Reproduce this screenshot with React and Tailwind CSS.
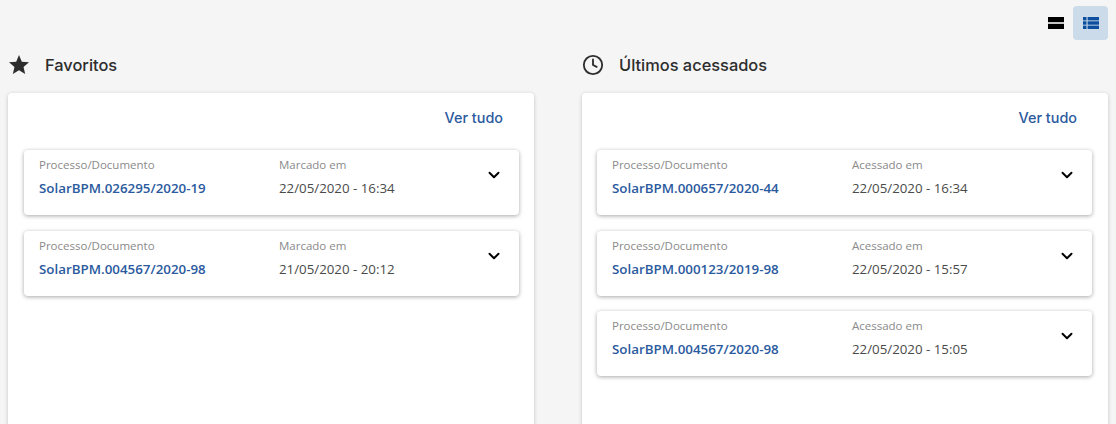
import { Clock, ChevronDown } from 'lucide-react';

const favoritos = [
  { id: 'SolarBPM.026295/2020-19', date: '22/05/2020 - 16:34' },
  { id: 'SolarBPM.004567/2020-98', date: '21/05/2020 - 20:12' },
];

const acessados = [
  { id: 'SolarBPM.000657/2020-44', date: '22/05/2020 - 16:34' },
  { id: 'SolarBPM.000123/2019-98', date: '22/05/2020 - 15:57' },
  { id: 'SolarBPM.004567/2020-98', date: '22/05/2020 - 15:05' },
];

const ItemCard = ({ item, dateLabel }) => (
  <div className="flex h-[65px] rounded bg-white pl-[15px] pt-[7px] shadow-[0_1px_4px_rgba(0,0,0,0.35)]">
    <div className="w-[240px]">
      <p className="text-[11.5px] leading-[16px] text-[#8a8a8a]">Processo/Documento</p>
      <a href="#" className="mt-[5px] block text-[13.35px] font-semibold leading-[20px] text-[#2b5a9e]">{item.id}</a>
    </div>
    <div className="flex-1">
      <p className="text-[11.5px] leading-[16px] text-[#8a8a8a]">{dateLabel}</p>
      <p className="mt-[5px] text-[13.3px] leading-[20px] text-[#4a4a4a]">{item.date}</p>
    </div>
    <ChevronDown size={18} strokeWidth={2.6} className="mr-[16px] mt-[9px] text-black" />
  </div>
);

const Section = ({ icon, title, dateLabel, items, listClass }) => (
  <section className="w-[526px]">
    <div className="flex h-[26px] items-center">
      <span className="flex w-[37px] justify-start">{icon}</span>
      <h2 className="text-[16.4px] font-medium text-[#2d2d2d] [font-family:Inter,sans-serif]">{title}</h2>
    </div>
    <div className="mt-[15px] h-[400px] rounded bg-white pt-[16px] shadow-[0_1px_4px_rgba(0,0,0,0.2)]">
      <div className="flex justify-end pr-[31px]">
        <a href="#" className="text-[14.4px] font-medium leading-[18px] text-[#2b5a9e] [font-family:Inter,sans-serif]">Ver tudo</a>
      </div>
      <div className={`mt-[23px] flex flex-col gap-[15.6px] ${listClass}`}>
        {items.map((item) => (
          <ItemCard key={item.id} item={item} dateLabel={dateLabel} />
        ))}
      </div>
    </div>
  </section>
);

const App = () => (
  <div className="h-[424px] overflow-hidden bg-[#f5f5f5] px-2 pt-[6px] [font-family:'Open_Sans',sans-serif]">
    <div className="flex justify-end">
      <button className="flex h-[34px] w-[35px] items-center justify-center">
        <svg width="16" height="12" viewBox="0 0 16 12">
          <rect y="0" width="16" height="5.2" fill="#000" />
          <rect y="6.8" width="16" height="5.2" fill="#000" />
        </svg>
      </button>
      <button className="flex h-[34px] w-[35px] items-center justify-center rounded bg-[#ccdbea]">
        <svg width="16" height="12" viewBox="0 0 16 12" fill="#0b4f9e">
          <rect width="3.5" height="3.4" />
          <rect x="4.6" width="11.4" height="3.4" />
          <rect y="4.3" width="3.5" height="3.4" />
          <rect x="4.6" y="4.3" width="11.4" height="3.4" />
          <rect y="8.6" width="3.5" height="3.4" />
          <rect x="4.6" y="8.6" width="11.4" height="3.4" />
        </svg>
      </button>
    </div>
    <div className="mt-[12px] flex justify-between">
      <Section
        icon={
          <svg width="24" height="24" viewBox="0 0 24 24" fill="#2d2d2d" className="-ml-[1px]">
            <path d="M12 17.27L18.18 21l-1.64-7.03L22 9.24l-7.19-.61L12 2 9.19 8.63 2 9.24l5.46 4.73L5.82 21z" />
          </svg>
        }
        title="Favoritos"
        dateLabel="Marcado em"
        items={favoritos}
        listClass="pl-[16px] pr-[15px]"
      />
      <Section
        icon={<Clock size={22} strokeWidth={2} className="text-[#2d2d2d]" />}
        title="Últimos acessados"
        dateLabel="Acessado em"
        items={acessados}
        listClass="pl-[15px] pr-[16px]"
      />
    </div>
  </div>
);

export default App;
